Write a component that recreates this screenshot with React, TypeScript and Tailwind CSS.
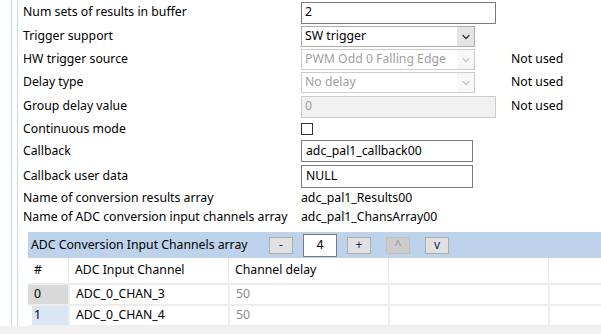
import { ChevronDown } from 'lucide-react'

const font = { fontFamily: '"Noto Sans", "Open Sans", sans-serif' }

function Select({ value, disabled, width }: { value: string; disabled?: boolean; width: string }) {
  return (
    <div
      className={`flex h-[21px] items-stretch border ${width} ${
        disabled ? 'border-[#cccccc] text-[#a0a0a0]' : 'border-[#adadad] text-black'
      } bg-white`}
    >
      <div className="flex flex-1 items-center pl-[3px] leading-none">{value}</div>
      <div
        className={`flex w-[17px] items-center justify-center ${
          disabled ? 'bg-[#f7f7f7] text-[#c8c8c8]' : 'bg-[#e5e5e5] text-[#333]'
        }`}
      >
        <ChevronDown className="h-3 w-3" strokeWidth={2.5} />
      </div>
    </div>
  )
}

function Row({ label, h, children, note }: { label: string; h: string; children?: React.ReactNode; note?: string }) {
  return (
    <div className={`grid grid-cols-[278px_210px_1fr] items-center whitespace-nowrap ${h}`}>
      <div>{label}</div>
      <div>{children}</div>
      <div>{note}</div>
    </div>
  )
}

function Btn({ label, disabled }: { label: string; disabled?: boolean }) {
  return (
    <div
      className={`flex h-[17px] w-[24px] items-center justify-center border text-[12px] leading-none ${
        disabled ? 'border-[#bfbfbf] bg-[#cccccc] text-[#9a9a9a]' : 'border-[#adadad] bg-[#e1e1e1] text-[#1a1a5a]'
      }`}
    >
      {label}
    </div>
  )
}

const rows = [
  { idx: '0', chan: 'ADC_0_CHAN_3', delay: '50', idxBg: 'bg-[#d9d9d9]' },
  { idx: '1', chan: 'ADC_0_CHAN_4', delay: '50', idxBg: 'bg-[#dbe6f4] ml-[4px]' },
  { idx: '', chan: '', delay: '', idxBg: 'bg-[#dbe6f4] ml-[4px]' },
]

export default function App() {
  return (
    <div className="relative h-[334px] w-[601px] overflow-hidden bg-white text-[12.25px] text-black" style={font}>
      <div className="ml-[11px] h-[326px] border-l border-[#c9dbee]">
        <div className="ml-[5px] h-full border-l border-[#c9dbee] pl-[5px]">
          {/* Settings form */}
          <Row label="Num sets of results in buffer" h="h-[25px]">
            <div className="flex h-[22px] w-[195px] items-center border border-[#7a7a7a] pl-[3px]">2</div>
          </Row>
          <Row label="Trigger support" h="h-[23px]">
            <Select value="SW trigger" width="w-[174px]" />
          </Row>
          <Row label="HW trigger source" h="h-[23px]" note="Not used">
            <Select value="PWM Odd 0 Falling Edge" width="w-[174px]" disabled />
          </Row>
          <Row label="Delay type" h="h-[23px]" note="Not used">
            <Select value="No delay" width="w-[174px]" disabled />
          </Row>
          <Row label="Group delay value" h="h-[25px]" note="Not used">
            <div className="flex h-[22px] w-[195px] items-center border border-[#cccccc] bg-[#f0f0f0] pl-[3px] text-[#a0a0a0]">
              0
            </div>
          </Row>
          <Row label="Continuous mode" h="h-[20px]">
            <div className="h-[12px] w-[12px] border border-[#333]" />
          </Row>
          <Row label="Callback" h="h-[24px]">
            <div className="flex h-[22px] w-[172px] items-center border border-[#7a7a7a] pl-[4px]">adc_pal1_callback00</div>
          </Row>
          <Row label="Callback user data" h="h-[26px]">
            <div className="flex h-[23px] w-[172px] items-center border border-[#7a7a7a] pl-[4px]">NULL</div>
          </Row>
          <Row label="Name of conversion results array" h="h-[19px]">
            adc_pal1_Results00
          </Row>
          <Row label="Name of ADC conversion input channels array" h="h-[19px]">
            adc_pal1_ChansArray00
          </Row>

          {/* Channels array panel */}
          <div className="ml-[5px] mt-[5px]">
            <div className="flex h-[26px] items-center bg-[#bcd3eb] pl-[3px]">
              <span className="w-[238px]">ADC Conversion Input Channels array</span>
              <Btn label="-" />
              <div className="ml-[10px] flex h-[23px] w-[34px] items-center justify-center border border-[#7a7a7a] bg-white">
                4
              </div>
              <div className="ml-[10px]">
                <Btn label="+" />
              </div>
              <div className="ml-[15px]">
                <Btn label="^" disabled />
              </div>
              <div className="ml-[15px]">
                <Btn label="v" />
              </div>
            </div>
            <div className="grid h-[25px] grid-cols-[40px_160px_160px_160px_1fr] items-center">
              <div className="pl-[6px]">#</div>
              <div className="flex h-full items-center border-l border-[#e8e8e8] pl-[6px]">ADC Input Channel</div>
              <div className="flex h-full items-center border-l border-[#e8e8e8] pl-[6px]">Channel delay</div>
              <div className="h-full border-l border-[#e8e8e8]" />
              <div className="h-full border-l border-[#e8e8e8]" />
            </div>
            {rows.map((r, i) => (
              <div key={i} className="grid h-[21px] grid-cols-[40px_160px_160px_160px_1fr] border-t-2 border-[#ededed]">
                <div className={`flex items-center pl-[6px] ${r.idxBg}`}>
                  {r.idx && <span className={i ? '-ml-[4px]' : ''}>{r.idx}</span>}
                </div>
                <div className="flex items-center border-l-2 border-[#ededed] pl-[6px]">{r.chan}</div>
                <div className="flex items-center border-l-2 border-[#ededed] pl-[6px] text-[#8c8c8c]">{r.delay}</div>
                <div className="border-l-2 border-[#ededed]" />
                <div className="border-l-2 border-[#ededed]" />
              </div>
            ))}
          </div>
        </div>
      </div>
      {/* horizontal scrollbar strip */}
      <div className="absolute bottom-0 left-0 h-[8px] w-full bg-[#f0f0f0]" />
    </div>
  )
}
